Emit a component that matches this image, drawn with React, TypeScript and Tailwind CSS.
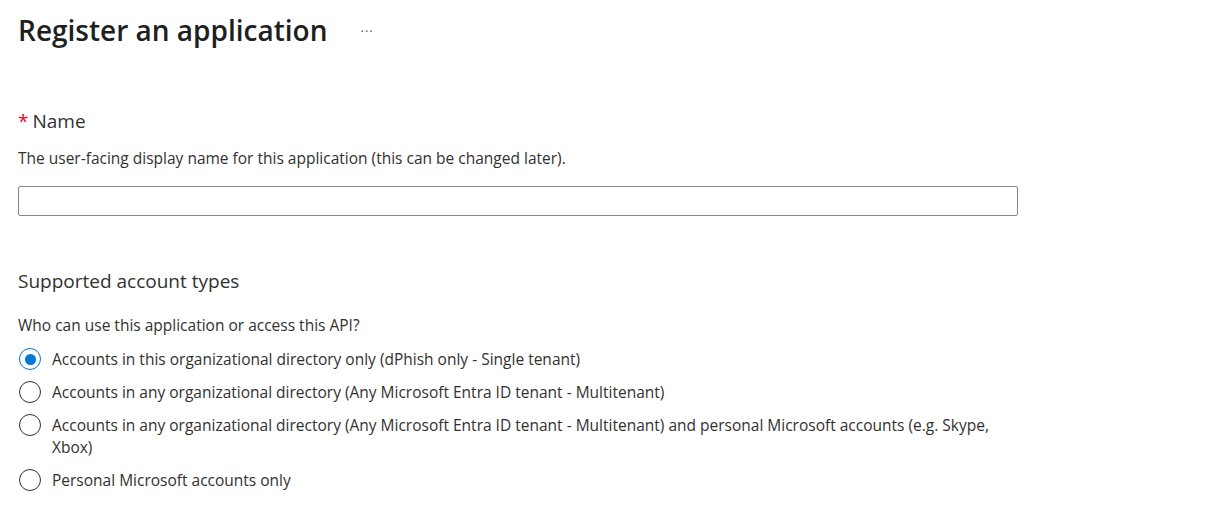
const options = [
  "Accounts in this organizational directory only (dPhish only - Single tenant)",
  "Accounts in any organizational directory (Any Microsoft Entra ID tenant - Multitenant)",
  "Accounts in any organizational directory (Any Microsoft Entra ID tenant - Multitenant) and personal Microsoft accounts (e.g. Skype, Xbox)",
  "Personal Microsoft accounts only",
];

function Radio({ checked }: { checked: boolean }) {
  return checked ? (
    <span className="flex h-[22px] w-[22px] shrink-0 items-center justify-center rounded-full border-[1.5px] border-[#0078d4]">
      <span className="h-[11px] w-[11px] rounded-full bg-[#0078d4]" />
    </span>
  ) : (
    <span className="h-[22px] w-[22px] shrink-0 rounded-full border-[1.5px] border-[#323130]" />
  );
}

export default function App() {
  return (
    <div className="h-[516px] w-[1222px] bg-white pl-[18px] font-['Open_Sans',sans-serif] text-[#323130]">
      <div className="flex items-center pt-[11px]">
        <h1 className="text-[28px] font-semibold leading-[38px] text-[#201f1e]">Register an application</h1>
        <span className="ml-[33px] mt-[4px] text-[13px] tracking-[1px] text-[#605e5c]">···</span>
      </div>

      <div className="mt-[60px] flex items-center text-[19px] leading-[24px]">
        <span className="mr-[4px] text-[#e00b1c]">*</span>
        <span>Name</span>
      </div>
      <p className="mt-[15px] text-[15.5px] leading-[20px]">
        The user-facing display name for this application (this can be changed later).
      </p>
      <input className="mt-[18px] block h-[30px] w-[1000px] rounded-[2px] border border-[#8a8886] px-2 text-[14px] outline-none" />

      <h2 className="mt-[53px] text-[19px] leading-[24px]">Supported account types</h2>
      <p className="mt-[22px] text-[15.5px] leading-[20px]">Who can use this application or access this API?</p>

      <div className="mt-[13px] flex w-[990px] flex-col gap-[11px] pl-[1px]">
        {options.map((o, i) => (
          <label key={o} className="flex gap-[11px] text-[15.5px] leading-[22px]">
            <Radio checked={i === 0} />
            <span>{o}</span>
          </label>
        ))}
      </div>
    </div>
  );
}
